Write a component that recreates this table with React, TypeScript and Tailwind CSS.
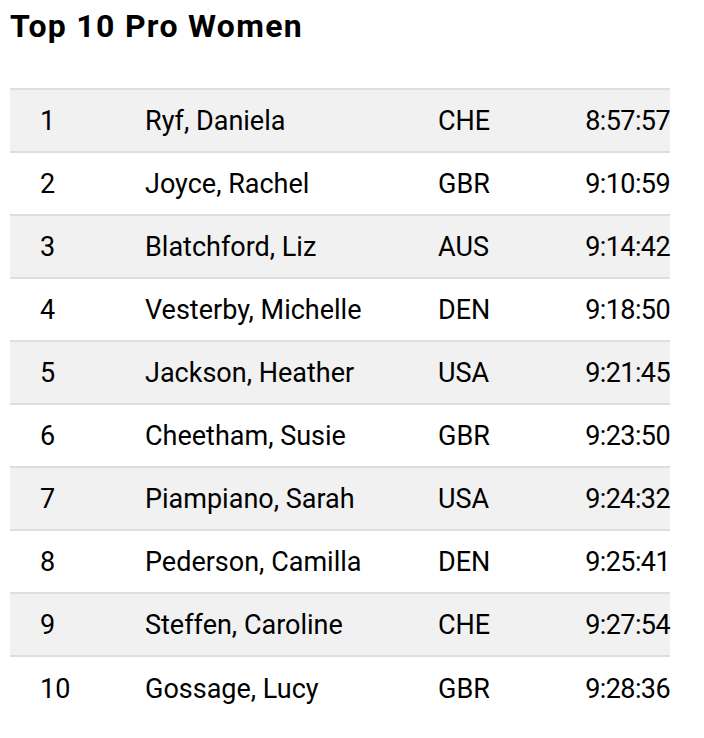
import React from "react";

const RESULTS = [
  { pos: 1, name: "Ryf, Daniela", country: "CHE", time: "8:57:57" },
  { pos: 2, name: "Joyce, Rachel", country: "GBR", time: "9:10:59" },
  { pos: 3, name: "Blatchford, Liz", country: "AUS", time: "9:14:42" },
  { pos: 4, name: "Vesterby, Michelle", country: "DEN", time: "9:18:50" },
  { pos: 5, name: "Jackson, Heather", country: "USA", time: "9:21:45" },
  { pos: 6, name: "Cheetham, Susie", country: "GBR", time: "9:23:50" },
  { pos: 7, name: "Piampiano, Sarah", country: "USA", time: "9:24:32" },
  { pos: 8, name: "Pederson, Camilla", country: "DEN", time: "9:25:41" },
  { pos: 9, name: "Steffen, Caroline", country: "CHE", time: "9:27:54" },
  { pos: 10, name: "Gossage, Lucy", country: "GBR", time: "9:28:36" },
];

export default function App() {
  return (
    <div className="min-h-screen bg-white pl-[10px] pt-[7px] font-['Roboto',sans-serif] text-black">
      <h2 className="text-[32px] font-bold leading-[38px] tracking-[1.3px]">Top 10 Pro Women</h2>

      <div className="mt-[43px] w-[660px] border-t-2 border-[#dedede]">
        {RESULTS.map((r, i) => (
          <div
            key={r.pos}
            className={`flex h-[63px] items-center pt-[2px] text-[27px] ${
              i % 2 === 0 ? "bg-[#f1f1f1]" : "bg-white"
            } ${i < RESULTS.length - 1 ? "border-b-2 border-[#dedede]" : ""}`}
          >
            <div className="w-[135px] pl-[30px]">{r.pos}</div>
            <div className="w-[293px]">{r.name}</div>
            <div className="w-[100px]">{r.country}</div>
            <div className="flex-1 text-right tracking-[-0.6px]">{r.time}</div>
          </div>
        ))}
      </div>
    </div>
  );
}
